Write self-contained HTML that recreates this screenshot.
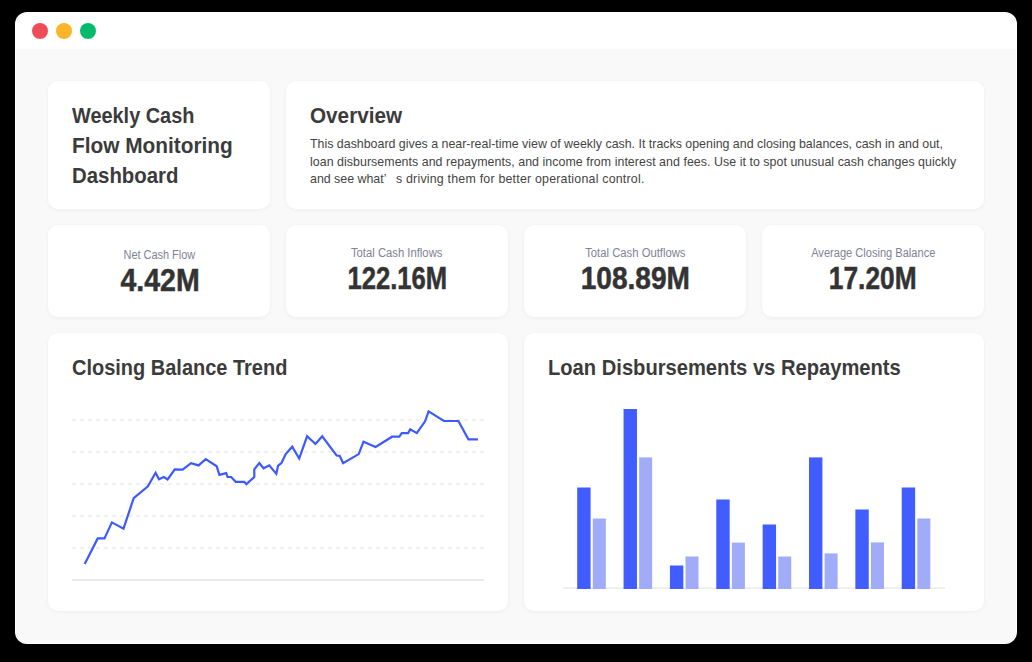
<!DOCTYPE html>
<html><head><meta charset="utf-8">
<style>
*{margin:0;padding:0;box-sizing:border-box}
html,body{width:1032px;height:662px;background:#000;overflow:hidden;font-family:"Liberation Sans",sans-serif}
.win{position:absolute;left:15px;top:12px;width:1002px;height:632px;background:#fff;border-radius:12px;overflow:hidden}
.content{position:absolute;left:16px;top:49px;width:1000px;height:594px;background:#f9f9f9;border-radius:0 0 11px 11px}
.dot{position:absolute;top:11px;width:16px;height:16px;border-radius:50%}
.card{position:absolute;background:#fff;border-radius:10px;box-shadow:0 1px 4px rgba(0,0,0,0.05)}
.t{position:absolute;white-space:nowrap;color:#333}
.h{font-weight:bold;font-size:21.2px;line-height:30px;color:#3b3b3b;transform-origin:0 0}
.p{font-size:12.4px;line-height:17.65px;color:#444}
.lbl{font-size:12px;line-height:12px;color:#7e8395;text-align:center;width:222px}
.lbl span{display:inline-block}
.val{font-weight:bold;font-size:31px;line-height:31px;color:#333;text-align:center;width:222px;-webkit-text-stroke:0.5px #333}
.val span{display:inline-block}
</style></head><body>
<div class="win">
  <div class="dot" style="left:17px;background:#f04b58"></div>
  <div class="dot" style="left:41px;background:#fcb42b"></div>
  <div class="dot" style="left:65px;background:#05bb6b"></div>
</div>
<div class="content"></div>

<div class="card" style="left:48px;top:81px;width:222px;height:128px"></div>
<div class="card" style="left:286px;top:81px;width:698px;height:128px"></div>
<div class="card" style="left:48px;top:225px;width:222px;height:92px"></div>
<div class="card" style="left:286px;top:225px;width:222px;height:92px"></div>
<div class="card" style="left:524px;top:225px;width:222px;height:92px"></div>
<div class="card" style="left:762px;top:225px;width:222px;height:92px"></div>
<div class="card" style="left:48px;top:333px;width:460px;height:278px"></div>
<div class="card" style="left:524px;top:333px;width:460px;height:278px"></div>

<div class="t h" style="left:72px;top:101px;transform:scaleX(0.939)">Weekly Cash</div>
<div class="t h" style="left:72px;top:131px;transform:scaleX(0.983)">Flow Monitoring</div>
<div class="t h" style="left:72px;top:161px;transform:scaleX(0.962)">Dashboard</div>
<div class="t h" style="left:310px;top:101px;transform:scaleX(0.977)">Overview</div>
<div class="t p" style="left:310px;top:135.8px">This dashboard gives a near-real-time view of weekly cash. It tracks opening and closing balances, cash in and out,</div>
<div class="t p" style="left:310px;top:153.5px;letter-spacing:0.045px">loan disbursements and repayments, and income from interest and fees. Use it to spot unusual cash changes quickly</div>
<div class="t p" style="left:310px;top:171.1px">and see what’<span style="margin-left:6px"> </span><span style="letter-spacing:0.21px">s driving them for better operational control.</span></div>

<div class="t lbl" style="left:48px;top:248.9px"><span style="transform:scaleX(0.911)">Net Cash Flow</span></div>
<div class="t lbl" style="left:286px;top:246.5px"><span style="transform:scaleX(0.939)">Total Cash Inflows</span></div>
<div class="t lbl" style="left:524px;top:246.5px"><span style="transform:scaleX(0.94)">Total Cash Outflows</span></div>
<div class="t lbl" style="left:762px;top:246.5px"><span style="transform:scaleX(0.923)">Average Closing Balance</span></div>
<div class="t val" style="left:49px;top:264.6px"><span style="transform:scaleX(0.920)">4.42M</span></div>
<div class="t val" style="left:286px;top:262.8px"><span style="transform:scaleX(0.827)">122.16M</span></div>
<div class="t val" style="left:524px;top:262.8px"><span style="transform:scaleX(0.905)">108.89M</span></div>
<div class="t val" style="left:762px;top:262.8px"><span style="transform:scaleX(0.848)">17.20M</span></div>

<div class="t h" style="left:72px;top:352.7px;transform:scaleX(0.943)">Closing Balance Trend</div>
<div class="t h" style="left:548px;top:352.7px;transform:scaleX(0.951)">Loan Disbursements vs Repayments</div>
<svg width="1032" height="662" style="position:absolute;left:0;top:0"><line x1="72" y1="420" x2="484" y2="420" stroke="#e2e2e2" stroke-width="1" stroke-dasharray="4 4"/><line x1="72" y1="452" x2="484" y2="452" stroke="#e2e2e2" stroke-width="1" stroke-dasharray="4 4"/><line x1="72" y1="484" x2="484" y2="484" stroke="#e2e2e2" stroke-width="1" stroke-dasharray="4 4"/><line x1="72" y1="516" x2="484" y2="516" stroke="#e2e2e2" stroke-width="1" stroke-dasharray="4 4"/><line x1="72" y1="548" x2="484" y2="548" stroke="#e2e2e2" stroke-width="1" stroke-dasharray="4 4"/><line x1="72" y1="580" x2="484" y2="580" stroke="#ebebeb" stroke-width="2"/><path d="M84.7,563.9 L97.7,538.4 L104.5,538.4 L111.9,522.4 L123.5,528.6 L133.7,498.2 L147.9,486.3 L155.6,472.7 L159,479.2 L163.8,477 L167.6,479.5 L174.8,469.3 L182.6,469.7 L191,463.1 L198.6,465.4 L205.7,459.2 L216.7,466.3 L219.4,474.9 L226.2,473.1 L227.6,477 L231.2,477 L235.7,481.8 L244.3,481.8 L246.3,484.1 L254.3,477 L254.3,469.4 L259.3,463.1 L263.6,468.3 L269.3,465.3 L276.3,473.9 L278.1,465.7 L281.5,463 L285.7,454 L292.2,446.7 L299.2,458.5 L307.1,436.3 L315.5,444 L322.2,436.3 L336.6,455.5 L339.7,455.8 L343.1,463.3 L358.7,454.1 L363.5,441.7 L375.6,447 L392.1,436.7 L399.3,436.7 L401.8,433.1 L408.2,433.1 L410.2,429.2 L416.8,433.1 L425.1,421.3 L428.6,411.3 L443.9,421 L458.4,421 L468.4,439.4 L477.9,439.4" fill="none" stroke="#3d5afe" stroke-width="2.2" stroke-linejoin="miter"/><rect x="563" y="587.3" width="382" height="1.6" fill="#ececec"/><rect x="577.20" y="487.5" width="13.4" height="101.5" fill="#415dff"/><rect x="592.80" y="518.5" width="13.0" height="70.5" fill="#a0acf7"/><rect x="623.56" y="409" width="13.4" height="180.0" fill="#415dff"/><rect x="639.16" y="457.4" width="13.0" height="131.6" fill="#a0acf7"/><rect x="669.92" y="565.5" width="13.4" height="23.5" fill="#415dff"/><rect x="685.52" y="556.5" width="13.0" height="32.5" fill="#a0acf7"/><rect x="716.28" y="499.5" width="13.4" height="89.5" fill="#415dff"/><rect x="731.88" y="542.6" width="13.0" height="46.4" fill="#a0acf7"/><rect x="762.64" y="524.5" width="13.4" height="64.5" fill="#415dff"/><rect x="778.24" y="556.5" width="13.0" height="32.5" fill="#a0acf7"/><rect x="809.00" y="457.4" width="13.4" height="131.6" fill="#415dff"/><rect x="824.60" y="553.4" width="13.0" height="35.6" fill="#a0acf7"/><rect x="855.36" y="509.5" width="13.4" height="79.5" fill="#415dff"/><rect x="870.96" y="542.4" width="13.0" height="46.6" fill="#a0acf7"/><rect x="901.72" y="487.5" width="13.4" height="101.5" fill="#415dff"/><rect x="917.32" y="518.5" width="13.0" height="70.5" fill="#a0acf7"/></svg>
</body></html>
